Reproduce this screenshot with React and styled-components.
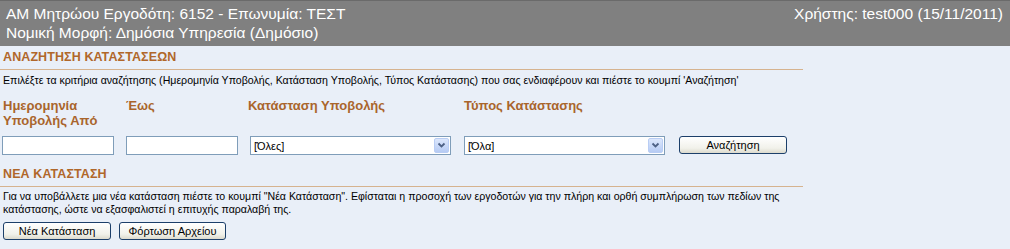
import React from "react";
import styled, { createGlobalStyle } from "styled-components";

const GlobalStyle = createGlobalStyle`
  html, body {
    margin: 0;
    padding: 0;
    background: #e9eff8;
  }
  body {
    font-family: "Liberation Sans", Arial, sans-serif;
  }
`;

const Page = styled.div`
  width: 1010px;
  height: 249px;
  background: #e9eff8;
  overflow: hidden;
`;

const Header = styled.header`
  display: flex;
  justify-content: space-between;
  align-items: flex-start;
  height: 46px;
  box-sizing: border-box;
  padding: 3px 7px 0 6px;
  background: #808080;
  border-top: 1px solid #6a6a6a;
  color: #fff;
  font-size: 15.5px;
  line-height: 19px;
`;

const Section = styled.section`
  padding: 0 0 0 3px;
`;

const SectionTitle = styled.h2`
  margin: ${(p) => p.$gap || 0}px 0 0 -3px;
  width: 800px;
  padding: 4px 0 5px 3px;
  border-bottom: 1px solid #d6b38f;
  color: #b0672a;
  font-size: 12.5px;
  font-weight: bold;
  line-height: 14px;
  letter-spacing: 0.1px;
`;

const Text = styled.p`
  margin: ${(p) => (p.$tight ? 3 : 4)}px 0 0;
  color: #000;
  font-size: 10.6px;
  line-height: 13px;
  width: 800px;
`;

const SearchGrid = styled.div`
  display: grid;
  grid-template-columns: 123px 122px 216px 215px auto;
  grid-template-rows: 39px auto;
  margin-top: 10px;
  align-items: start;
`;

const Label = styled.label`
  color: #a9652c;
  font-size: 13px;
  font-weight: bold;
  line-height: 15px;
  padding-top: 1px;
`;

const TextInput = styled.input`
  box-sizing: border-box;
  width: 112px;
  height: 19px;
  margin: 0 0 0 ${(p) => p.$shift || 0}px;
  border: 1px solid #7f9db9;
  background: #fff;
  padding: 0;
`;

const Select = styled.div`
  box-sizing: border-box;
  display: flex;
  align-items: center;
  justify-content: space-between;
  width: 201px;
  height: 19px;
  margin-left: ${(p) => p.$shift || 0}px;
  border: 1px solid #7f9db9;
  background: #fff;
  font-size: 11px;
  color: #000;
  padding: 0 1px 0 3px;
`;

const Arrow = styled.span`
  display: flex;
  align-items: center;
  justify-content: center;
  width: 15px;
  height: 15px;
  box-sizing: border-box;
  border: 1px solid #b9cdf4;
  border-radius: 2px;
  background: linear-gradient(#dce7fc, #b6cbf4);
`;

const Button = styled.button`
  box-sizing: border-box;
  width: ${(p) => p.$w}px;
  height: 18px;
  padding: 0;
  border: 1px solid #1c3f6a;
  border-radius: 3px;
  background: linear-gradient(#ffffff, #f1f1ea 70%, #dcdacd);
  font-family: "Liberation Sans", Arial, sans-serif;
  font-size: 11px;
  color: #000;
  cursor: pointer;
`;

const ButtonRow = styled.div`
  display: flex;
  gap: 8px;
  margin-top: 6px;
`;

const Chevron = () => (
  <svg width="9" height="7" viewBox="0 0 9 7">
    <path d="M1.5 1.5 L4.5 4.5 L7.5 1.5" fill="none" stroke="#4d6185" strokeWidth="1.8" />
  </svg>
);

export default function App() {
  return (
    <Page>
      <GlobalStyle />
      <Header>
        <div>
          ΑΜ Μητρώου Εργοδότη: 6152 - Επωνυμία: ΤΕΣΤ
          <br />
          Νομική Μορφή: Δημόσια Υπηρεσία (Δημόσιο)
        </div>
        <div>Χρήστης: test000 (15/11/2011)</div>
      </Header>

      <Section>
        <SectionTitle>ΑΝΑΖΗΤΗΣΗ ΚΑΤΑΣΤΑΣΕΩΝ</SectionTitle>
        <Text>
          Επιλέξτε τα κριτήρια αναζήτησης (Ημερομηνία Υποβολής, Κατάσταση Υποβολής, Τύπος
          Κατάστασης) που σας ενδιαφέρουν και πιέστε το κουμπί 'Αναζήτηση'
        </Text>
        <SearchGrid>
          <Label>
            Ημερομηνία
            <br />
            Υποβολής Από
          </Label>
          <Label>Έως</Label>
          <Label>Κατάσταση Υποβολής</Label>
          <Label>Τύπος Κατάστασης</Label>
          <span />
          <TextInput $shift={-1} />
          <TextInput />
          <Select $shift={2}>
            [Όλες]
            <Arrow>
              <Chevron />
            </Arrow>
          </Select>
          <Select>
            [Όλα]
            <Arrow>
              <Chevron />
            </Arrow>
          </Select>
          <Button $w={108}>Αναζήτηση</Button>
        </SearchGrid>
        <SectionTitle $gap={8}>ΝΕΑ ΚΑΤΑΣΤΑΣΗ</SectionTitle>
        <Text $tight>
          Για να υποβάλλετε μια νέα κατάσταση πιέστε το κουμπί "Νέα Κατάσταση". Εφίσταται η
          προσοχή των εργοδοτών για την πλήρη και ορθή συμπλήρωση των πεδίων της κατάστασης,
          ώστε να εξασφαλιστεί η επιτυχής παραλαβή της.
        </Text>
        <ButtonRow>
          <Button $w={108}>Νέα Κατάσταση</Button>
          <Button $w={107}>Φόρτωση Αρχείου</Button>
        </ButtonRow>
      </Section>
    </Page>
  );
}
